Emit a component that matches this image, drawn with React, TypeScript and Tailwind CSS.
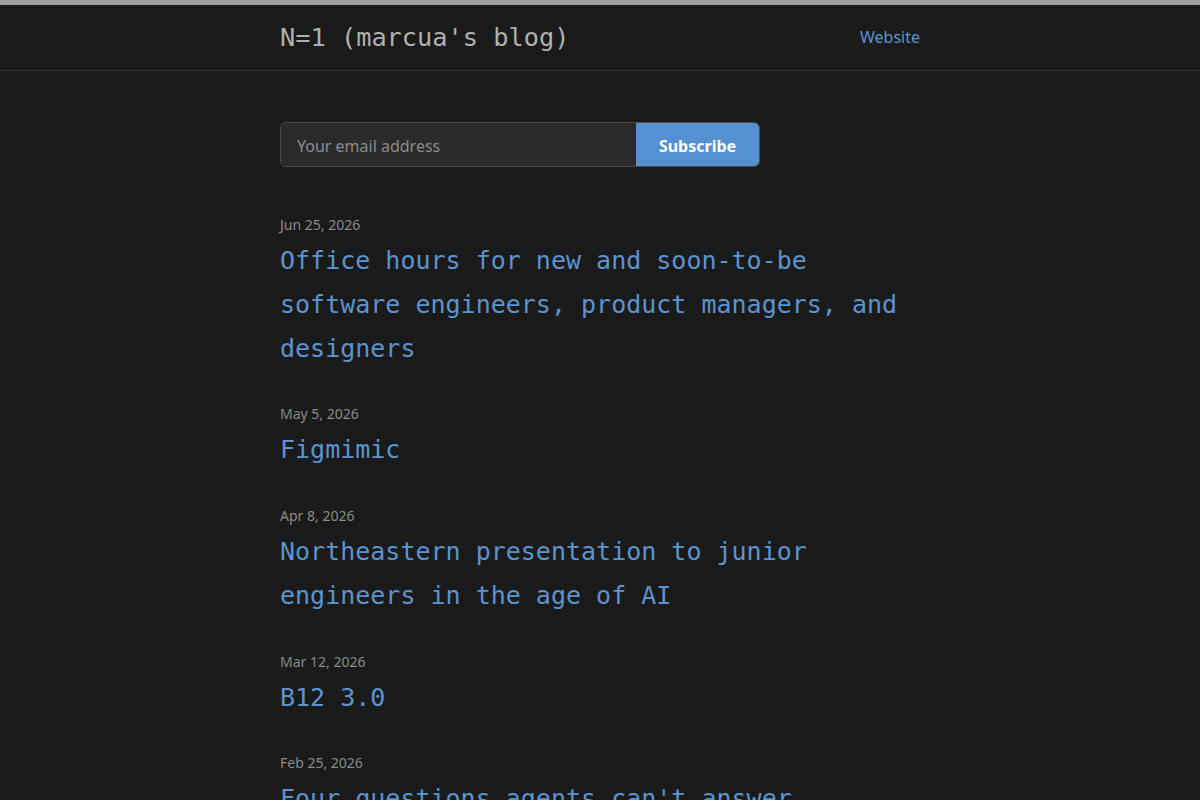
const posts = [
  { date: 'Jun 25, 2026', title: 'Office hours for new and soon-to-be software engineers, product managers, and designers' },
  { date: 'May 5, 2026', title: 'Figmimic' },
  { date: 'Apr 8, 2026', title: 'Northeastern presentation to junior engineers in the age of AI' },
  { date: 'Mar 12, 2026', title: 'B12 3.0' },
  { date: 'Feb 25, 2026', title: "Four questions agents can't answer" },
];

const mono = "font-['DejaVu_Sans_Mono',monospace]";

export default function App() {
  return (
    <div className="min-h-screen bg-[#1a1a1a] font-['Noto_Sans',sans-serif]">
      <div className="h-[5px] bg-[#9e9e9e]" />
      <header className="border-b border-[#333333]">
        <div className="mx-auto flex h-[65px] w-[640px] items-center justify-between">
          <a className={`${mono} text-[25.3px] text-[#b0b0b0]`}>N=1 (marcua's blog)</a>
          <a className="-mt-0.5 text-base text-[#5b94cf]">Website</a>
        </div>
      </header>

      <main className="mx-auto w-[640px] pt-[51px]">
        <form className="flex h-[45px] w-[480px] overflow-hidden rounded-md border border-[#4d4d4d]">
          <input
            type="email"
            placeholder="Your email address"
            className="flex-1 bg-[#2a2a2a] px-4 pt-0.5 text-base text-white outline-none placeholder:text-[#8c8c8c]"
          />
          <button type="button" className="w-[123px] bg-[#5590d0] pt-0.5 text-base font-bold text-white">
            Subscribe
          </button>
        </form>

        <div className="pt-[48px]">
          {posts.map((p) => (
            <article key={p.date} className="mb-[34px]">
              <div className="text-sm leading-5 text-[#8a8a8a]">{p.date}</div>
              <a className={`${mono} mt-1 block text-[25px] leading-[43.75px] text-[#5b94cf]`}>{p.title}</a>
            </article>
          ))}
        </div>
      </main>
    </div>
  );
}
